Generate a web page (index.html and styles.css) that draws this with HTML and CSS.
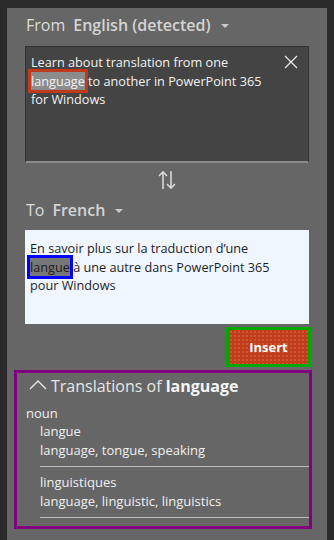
FILE: index.html
```html
<!DOCTYPE html>
<html lang="en">
<head>
    <meta charset="UTF-8">
    <title>Translator</title>
    <link rel="stylesheet" href="styles.css">
</head>
<body>
    <div class="panel">
        <div class="lang-row">
            <span class="lang-label">From</span>
            <span class="lang-name">English (detected)</span>
            <span class="caret"></span>
        </div>
        <div class="source-box">
            <p class="source-text">Learn about translation from one<br><span class="hl-src">language</span> <span>to another in PowerPoint 365</span><br>for Windows</p>
            <svg class="close" width="14" height="14" viewBox="0 0 14 14">
                <path d="M1 1 L13 13 M13 1 L1 13" stroke="#e8e8e8" stroke-width="1.3" fill="none"/>
            </svg>
        </div>
        <div class="swap">
            <svg width="20" height="20" viewBox="0 0 20 20">
                <path d="M6 19 V2 M2 6 L6 2 L10 6" stroke="#d8d8d8" stroke-width="1.6" fill="none"/>
                <path d="M14 1 V18 M10 14 L14 18 L18 14" stroke="#d8d8d8" stroke-width="1.6" fill="none"/>
            </svg>
        </div>
        <div class="lang-row">
            <span class="lang-label">To</span>
            <span class="lang-name">French</span>
            <span class="caret"></span>
        </div>
        <div class="target-box">
            <p class="target-text">En savoir plus sur la traduction d’une<br><span class="hl-tgt">langue</span> <span>à une autre dans PowerPoint 365</span><br>pour Windows</p>
        </div>
        <div class="actions">
            <button class="insert">Insert</button>
        </div>
        <div class="translations">
            <div class="tr-head">
                <svg width="18" height="11" viewBox="0 0 18 11">
                    <path d="M1 10 L9 2 L17 10" stroke="#e8e8e8" stroke-width="1.4" fill="none"/>
                </svg>
                <span>Translations of <b>language</b></span>
            </div>
            <div class="pos">noun</div>
            <div class="entry">
                <div class="word">langue</div>
                <div class="back">language, tongue, speaking</div>
            </div>
            <div class="entry">
                <div class="word">linguistiques</div>
                <div class="back">language, linguistic, linguistics</div>
            </div>
        </div>
    </div>
</body>
</html>
```

FILE: styles.css
```css
body, html {
    margin: 0;
    padding: 0;
    height: 100%;
    background-color: #2b2b2b;
    font-family: "Open Sans", "Noto Sans", sans-serif;
    overflow: hidden;
}
.panel {
    margin: 8px 0 0 7px;
    width: 320px;
    height: 532px;
    background-color: #666666;
    padding-top: 4px;
    box-sizing: border-box;
}
.lang-row {
    display: flex;
    align-items: center;
    height: 26px;
    padding-left: 19px;
    font-size: 16px;
    color: #dcdcdc;
}
.lang-label {
    margin-right: 8px;
}
.lang-name {
    font-weight: 600;
    color: #d4d4d4;
}
.caret {
    margin-left: 10px;
    margin-top: 2px;
    width: 0;
    height: 0;
    border-left: 4px solid transparent;
    border-right: 4px solid transparent;
    border-top: 4px solid #c8c8c8;
}
.source-box {
    position: relative;
    margin: 8px 0 0 18px;
    width: 284px;
    height: 117px;
    box-sizing: border-box;
    background-color: #444444;
    border: 1px solid #333333;
    border-bottom: 2px solid #8a8a8a;
}
.source-text, .target-text {
    margin: 0;
    padding: 6px 20px 0 5px;
    font-size: 12.7px;
    line-height: 18.5px;
}
.source-text {
    color: #f2f2f2;
}
.hl-src {
    background-color: #8c8c8c;
    box-shadow: 0 0 0 3px #c0391b;
    color: #f4f4f4;
}
.close {
    position: absolute;
    top: 8px;
    right: 10px;
}
.swap {
    display: flex;
    justify-content: center;
    height: 34px;
    align-items: center;
}
.target-box {
    margin: 7px 0 0 18px;
    width: 284px;
    height: 94px;
    box-sizing: border-box;
    background-color: #eff6ff;
}
.target-text {
    color: #1e1e1e;
    padding-top: 9px;
}
.hl-tgt {
    background-color: #777777;
    box-shadow: 0 0 0 3px #0000ff;
}
.actions {
    display: flex;
    justify-content: flex-end;
    margin-top: 3px;
    padding-right: 16px;
}
.insert {
    width: 85px;
    height: 40px;
    box-sizing: border-box;
    border: 3px solid #00a800;
    background-color: #c23c1c;
    background-image: radial-gradient(#d9774f 0.6px, transparent 0.8px);
    background-size: 4px 4px;
    color: #ffffff;
    font-family: "Open Sans", sans-serif;
    font-weight: 700;
    font-size: 13px;
    padding: 0;
}
.translations {
    margin: 3px 0 0 7px;
    width: 298px;
    height: 159px;
    box-sizing: border-box;
    border: 3px solid #800080;
    color: #f0f0f0;
    font-size: 13px;
}
.tr-head {
    display: flex;
    align-items: center;
    gap: 4px;
    padding: 0 0 0 12px;
    height: 26px;
    font-size: 16px;
    color: #e6e6e6;
}
.tr-head svg {
    margin-bottom: 3px;
}
.tr-head b {
    font-weight: 700;
    color: #f4f4f4;
}
.pos {
    margin-top: 5px;
    padding-left: 9px;
    line-height: 18px;
}
.entry {
    margin-left: 23px;
    border-bottom: 1px solid #bdbdbd;
    padding-bottom: 6px;
    margin-bottom: 6px;
}
.word, .back {
    line-height: 19px;
}
```
